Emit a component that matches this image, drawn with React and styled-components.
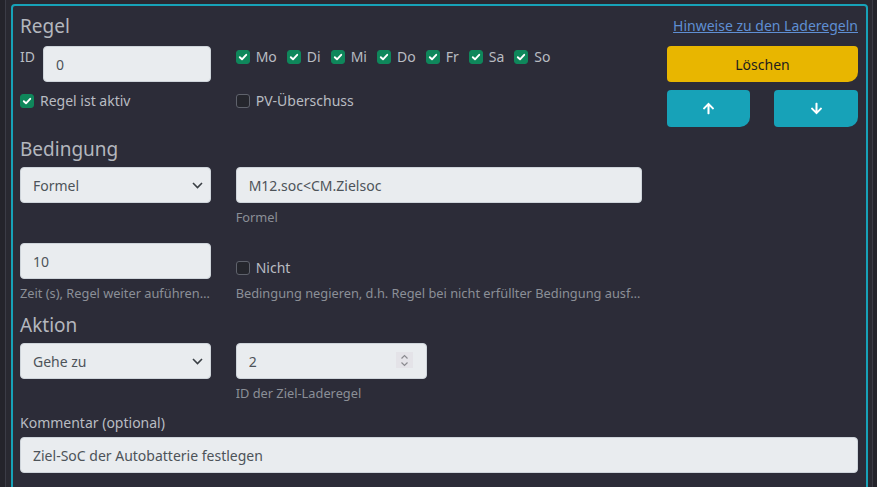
import React from "react";
import styled, { createGlobalStyle } from "styled-components";
import { FaArrowUp, FaArrowDown } from "react-icons/fa";

const GlobalStyle = createGlobalStyle`
  html, body {
    margin: 0;
    padding: 0;
    background-color: #24242b;
    font-family: "Noto Sans", "Open Sans", sans-serif;
  }
  * {
    box-sizing: border-box;
  }
`;

const Frame = styled.div`
  margin-left: 5px;
  width: 868px;
  min-height: 100vh;
  padding: 4px 4px 0 5px;
  border-left: 1px solid #3b3c46;
  border-right: 1px solid #3b3c46;
  background-color: #292931;
`;

const Card = styled.div`
  border: 2px solid #17a2b8;
  border-radius: 4px;
  background-color: #2c2c38;
  padding: 8px 8px 24px 7px;
  color: #b9bcc2;
  font-size: 14px;
`;

const Grid = styled.div`
  display: grid;
  grid-template-columns: repeat(4, 1fr);
  column-gap: 24.67px;
  align-items: start;
  margin-top: ${(p) => p.$top || 0}px;
`;

const Cell = styled.div`
  grid-column: ${(p) => p.$col || "auto"};
  display: ${(p) => (p.$flex ? "flex" : "block")};
  min-width: 0;
`;

const Heading = styled.h4`
  margin: ${(p) => p.$top || 0}px 0 0 0;
  font-size: 19px;
  font-weight: 400;
  line-height: 24px;
  color: #b4b7be;
`;

const HelpLink = styled.a`
  justify-self: end;
  margin-top: 1px;
  font-size: 14px;
  line-height: 21px;
  color: #5f8fd3;
  text-decoration: underline;
  cursor: pointer;
`;

const FieldLabel = styled.span`
  display: inline-block;
  width: 23px;
  flex-shrink: 0;
  line-height: 22px;
`;

const TopLabel = styled.div`
  line-height: 21px;
  margin-bottom: 4px;
`;

const Input = styled.input`
  display: block;
  width: 100%;
  height: 36px;
  padding: 0 12px;
  font-family: inherit;
  font-size: 14px;
  color: #4d5359;
  background-color: #e9ecef;
  border: 1px solid #ced4da;
  border-radius: 4px;
  outline: none;
  &::-webkit-inner-spin-button,
  &::-webkit-outer-spin-button {
    -webkit-appearance: none;
    margin: 0;
  }
`;

const FieldWrap = styled.div`
  position: relative;
  flex: 1;
`;

const Select = styled.select`
  display: block;
  width: 100%;
  height: 36px;
  padding: 0 12px;
  font-family: inherit;
  font-size: 14px;
  color: #4d5359;
  background-color: #e9ecef;
  border: 1px solid #ced4da;
  border-radius: 4px;
  appearance: none;
  outline: none;
`;

const Chevron = styled.svg`
  position: absolute;
  right: 8px;
  top: 15px;
  pointer-events: none;
`;

const Spinner = styled.div`
  position: absolute;
  right: 14px;
  top: 9px;
  width: 17px;
  height: 16px;
  background-color: #e4e3e8;
  display: flex;
  align-items: center;
  justify-content: center;
  pointer-events: none;
`;

const Help = styled.div`
  margin-top: 5px;
  font-size: 12.8px;
  line-height: 18px;
  color: #8b8f97;
  white-space: nowrap;
  overflow: hidden;
  text-overflow: ellipsis;
`;

const CheckLabel = styled.label`
  display: inline-flex;
  align-items: center;
  line-height: 22px;
  margin-right: ${(p) => p.$gap || 0}px;
  white-space: nowrap;
`;

const Box = styled.span`
  width: 14px;
  height: 14px;
  margin: 0 6px 0 0;
  border-radius: 3px;
  display: inline-flex;
  align-items: center;
  justify-content: center;
  background-color: ${(p) => (p.$checked ? "#0f875b" : "#25262d")};
  border: 1px solid ${(p) => (p.$checked ? "#0f875b" : "#5f626c")};
`;

const CheckRow = styled.div`
  display: flex;
  align-items: ${(p) => (p.$bottom ? "flex-end" : "flex-start")};
  height: ${(p) => (p.$bottom ? "36px" : "auto")};
`;

const Button = styled.button`
  display: flex;
  align-items: center;
  justify-content: center;
  width: 100%;
  height: ${(p) => p.$h || 36}px;
  border: none;
  border-radius: 4px 4px 10px 4px;
  font-family: inherit;
  font-size: 14px;
  color: ${(p) => (p.$variant === "warning" ? "#1d1d1f" : "#ffffff")};
  background-color: ${(p) => (p.$variant === "warning" ? "#e8b600" : "#17a2b8")};
  cursor: pointer;
`;

const ButtonPair = styled.div`
  display: grid;
  grid-template-columns: 1fr 1fr;
  column-gap: 24px;
`;

function Check({ checked, gap, children }) {
  return (
    <CheckLabel $gap={gap}>
      <Box $checked={checked}>
        {checked && (
          <svg width="10" height="10" viewBox="0 0 10 10">
            <path d="M1.8 5.2 L4 7.3 L8.2 2.8" fill="none" stroke="#fff" strokeWidth="1.9" strokeLinecap="round" strokeLinejoin="round" />
          </svg>
        )}
      </Box>
      {children}
    </CheckLabel>
  );
}

function DropDown({ value }) {
  return (
    <FieldWrap>
      <Select defaultValue={value}>
        <option>{value}</option>
      </Select>
      <Chevron width="11" height="7" viewBox="0 0 11 7">
        <path d="M1 1 L5.5 5.5 L10 1" fill="none" stroke="#3a3f45" strokeWidth="1.6" />
      </Chevron>
    </FieldWrap>
  );
}

const days = ["Mo", "Di", "Mi", "Do", "Fr", "Sa", "So"];

function App() {
  return (
    <>
      <GlobalStyle />
      <Frame>
        <Card>
          <Grid>
            <Cell $col="1 / span 3">
              <Heading>Regel</Heading>
            </Cell>
            <HelpLink>Hinweise zu den Laderegeln</HelpLink>
          </Grid>

          <Grid $top={8}>
            <Cell $flex>
              <FieldLabel>ID</FieldLabel>
              <FieldWrap>
                <Input defaultValue="0" />
              </FieldWrap>
            </Cell>
            <Cell $col="2 / span 2">
              <CheckRow>
                {days.map((d) => (
                  <Check key={d} checked gap={10}>
                    {d}
                  </Check>
                ))}
              </CheckRow>
            </Cell>
            <Cell>
              <Button $variant="warning">Löschen</Button>
            </Cell>
          </Grid>

          <Grid $top={8}>
            <Cell>
              <Check checked>Regel ist aktiv</Check>
            </Cell>
            <Cell>
              <Check>PV-Überschuss</Check>
            </Cell>
            <Cell $col="4">
              <ButtonPair>
                <Button $h={37}>
                  <FaArrowUp size={13} />
                </Button>
                <Button $h={37}>
                  <FaArrowDown size={13} />
                </Button>
              </ButtonPair>
            </Cell>
          </Grid>

          <Heading $top={10}>Bedingung</Heading>
          <Grid $top={6}>
            <Cell>
              <DropDown value="Formel" />
            </Cell>
            <Cell $col="2 / span 2">
              <Input defaultValue="M12.soc<CM.Zielsoc" />
              <Help>Formel</Help>
            </Cell>
          </Grid>

          <Grid $top={17}>
            <Cell>
              <Input defaultValue="10" />
              <Help>Zeit (s), Regel weiter auführen , wenn Bedingung nicht mehr erfüllt</Help>
            </Cell>
            <Cell $col="2 / span 2">
              <CheckRow $bottom>
                <Check>Nicht</Check>
              </CheckRow>
              <Help>Bedingung negieren, d.h. Regel bei nicht erfüllter Bedingung ausführen</Help>
            </Cell>
          </Grid>

          <Heading $top={11}>Aktion</Heading>
          <Grid $top={6}>
            <Cell>
              <DropDown value="Gehe zu" />
            </Cell>
            <Cell>
              <FieldWrap>
                <Input type="number" defaultValue="2" />
                <Spinner>
                  <svg width="9" height="13" viewBox="0 0 9 13">
                    <path d="M1.5 4.5 L4.5 1.5 L7.5 4.5 M1.5 8.5 L4.5 11.5 L7.5 8.5" fill="none" stroke="#8b8b90" strokeWidth="1.2" />
                  </svg>
                </Spinner>
              </FieldWrap>
              <Help>ID der Ziel-Laderegel</Help>
            </Cell>
          </Grid>

          <Grid $top={10}>
            <Cell $col="1 / span 4">
              <TopLabel>Kommentar (optional)</TopLabel>
              <Input defaultValue="Ziel-SoC der Autobatterie festlegen" />
            </Cell>
          </Grid>
        </Card>
      </Frame>
    </>
  );
}

export default App;
